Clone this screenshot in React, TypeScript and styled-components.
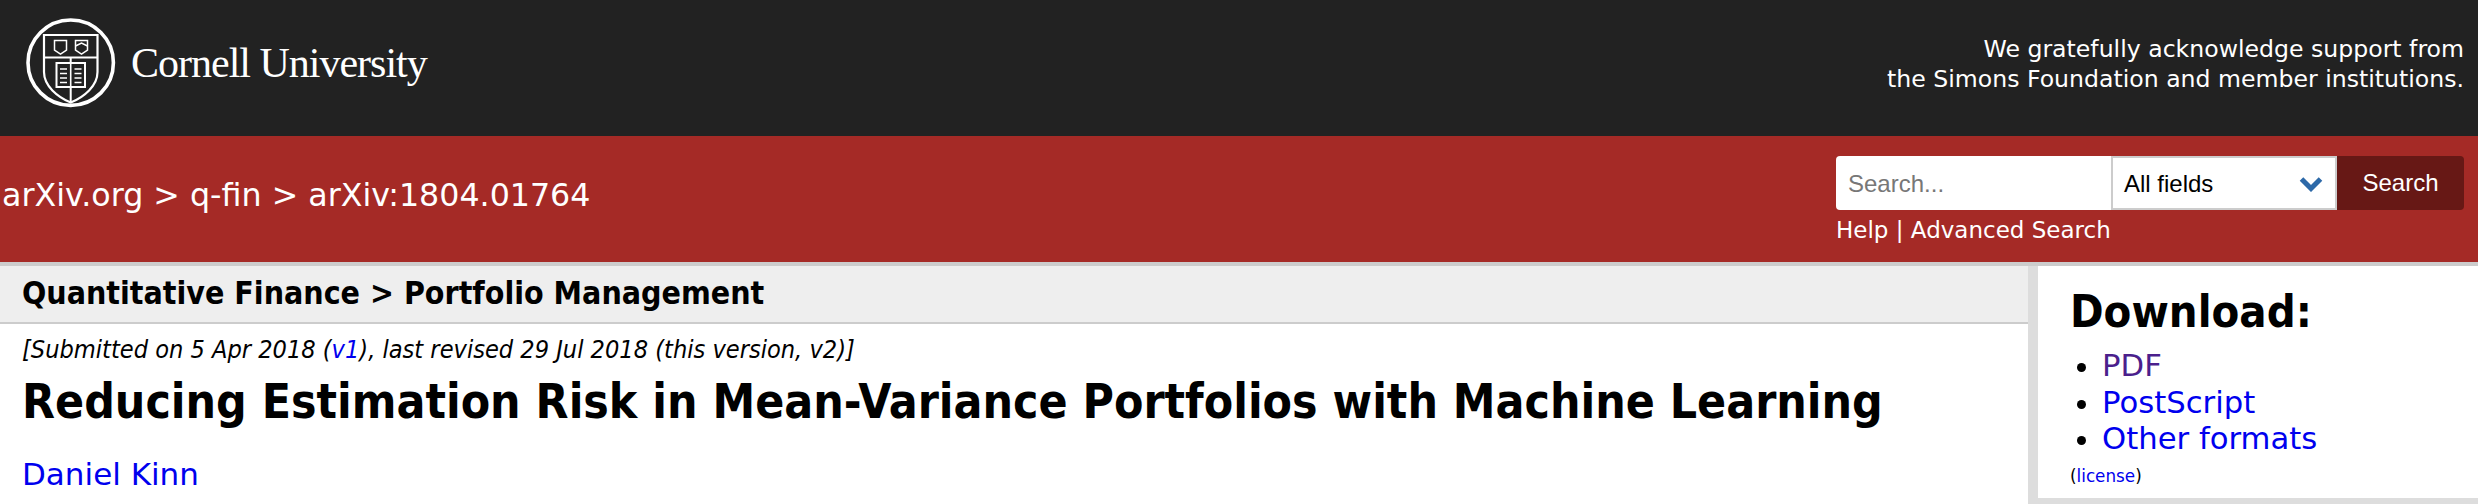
import React from 'react';
import styled, { createGlobalStyle } from 'styled-components';

const GlobalStyle = createGlobalStyle`
  html, body {
    margin: 0;
    padding: 0;
    background: #ddd;
    font-family: "DejaVu Sans", sans-serif;
    overflow: hidden;
  }
`;

const Page = styled.div`
  width: 2478px;
  height: 504px;
  display: flex;
  flex-direction: column;
  overflow: hidden;
`;

const TopBar = styled.header`
  height: 136px;
  background: #222;
  display: flex;
  align-items: flex-start;
  justify-content: space-between;
  padding: 0 14px 0 15px;
`;

const Brand = styled.a`
  display: flex;
  align-items: flex-start;
  margin-top: 10px;
  color: #fff;
`;

const BrandName = styled.span`
  font-family: "Liberation Serif", serif;
  font-size: 42px;
  line-height: 50px;
  letter-spacing: -1px;
  margin: 28px 0 0 6px;
`;

const Support = styled.p`
  margin: 34px 0 0;
  color: #fff;
  font-size: 23.6px;
  line-height: 30px;
  text-align: right;
`;

const RedBar = styled.div`
  height: 126px;
  background: #a52a26;
  display: flex;
  align-items: flex-start;
  justify-content: space-between;
  padding: 0 14px 0 2px;
  color: #fff;
`;

const Trail = styled.nav`
  margin-top: 39px;
  font-size: 31.7px;
  line-height: 40px;
  white-space: nowrap;
`;

const SearchArea = styled.div`
  margin-top: 20px;
  display: flex;
  flex-direction: column;
`;

const SearchRow = styled.form`
  display: flex;
  height: 54px;
`;

const SearchInput = styled.input`
  box-sizing: border-box;
  width: 275px;
  height: 54px;
  border: 0;
  border-radius: 4px 0 0 4px;
  padding: 2px 12px 0;
  background: #fff;
  font-family: "Liberation Sans", sans-serif;
  font-size: 24px;
  outline: none;

  &::placeholder {
    color: #777;
    opacity: 1;
  }
`;

const FieldBox = styled.div`
  box-sizing: border-box;
  width: 226px;
  height: 54px;
  border: 2px solid #ccc;
  background: #fff;
  display: flex;
  align-items: center;
  justify-content: space-between;
  padding: 1px 12px 0 11px;
  color: #000;
  font-family: "Liberation Sans", sans-serif;
  font-size: 24px;
`;

const SearchButton = styled.button`
  width: 127px;
  height: 54px;
  border: 0;
  border-radius: 0 4px 4px 0;
  background: #671815;
  color: #fff;
  font-family: "Liberation Sans", sans-serif;
  font-size: 24px;
  padding: 0;
`;

const SearchLinks = styled.div`
  margin-top: 5px;
  font-size: 23px;
  line-height: 30px;
`;

const Body = styled.div`
  flex: 1;
  display: flex;
  border-top: 4px solid #ccc;
  background: #fff;
`;

const Main = styled.main`
  width: 2028px;
  flex: none;
`;

const Subheader = styled.div`
  box-sizing: border-box;
  height: 58px;
  background: #eee;
  border-bottom: 2px solid #ccc;
  padding-left: 22px;
  font-size: 31.8px;
  font-stretch: condensed;
  font-weight: 700;
  line-height: 54px;
  color: #000;
`;

const Dateline = styled.div`
  margin: 11px 0 0 22px;
  font-size: 25.1px;
  font-stretch: condensed;
  line-height: 30px;
  font-style: italic;
  color: #000;
`;

const Title = styled.h1`
  margin: 9px 0 0 22px;
  font-size: 47.7px;
  font-stretch: condensed;
  line-height: 56px;
  font-weight: 700;
  color: #000;
`;

const Authors = styled.div`
  margin: 24px 0 0 22px;
  font-size: 31px;
  line-height: 40px;
`;

const Link = styled.a<{ $visited?: boolean }>`
  color: ${(p) => (p.$visited ? '#4b1f8c' : '#0000ee')};
`;

const Sidebar = styled.aside`
  flex: 1;
  background: #ddd;
  padding: 0 0 6px 10px;
  display: flex;
`;

const SideBox = styled.div`
  flex: 1;
  background: #fff;
  padding: 18px 0 0 32px;
`;

const SideTitle = styled.h2`
  margin: 0;
  font-size: 45px;
  font-stretch: condensed;
  line-height: 56px;
  font-weight: 700;
  color: #000;
`;

const FormatList = styled.ul`
  margin: 8px 0 0;
  padding: 0 0 0 32px;
  font-size: 30.7px;
  line-height: 36.5px;
`;

const License = styled.div`
  margin-top: 7px;
  font-size: 16.8px;
  line-height: 22px;
  color: #000;
`;

const CornellLogo = () => (
  <svg width="110" height="110" viewBox="0 0 110 110" fill="none" stroke="#fff">
    <circle cx="55.7" cy="52.7" r="42.7" strokeWidth="3.6" />
    <path d="M29 25H82.5V62C82.5 76 69 87 55.7 92.5C42.5 87 29 76 29 62Z" strokeWidth="2.2" />
    <path d="M29 47.5H82.5M55.7 47.5V53M55.7 77V92" strokeWidth="2" />
    <path d="M39.5 30.5H51.5V40L45.5 44L39.5 40Z" strokeWidth="1.5" />
    <path d="M60.5 30.5H72.5V40L66.5 44L60.5 40Z" strokeWidth="1.5" />
    <path d="M60.5 36L66.5 33L72.5 36" strokeWidth="1.5" />
    <rect x="41.5" y="53" width="28.5" height="24" strokeWidth="2" />
    <path d="M55.7 53V77" strokeWidth="1.6" />
    <path d="M45 59H52M45 63.5H52M45 68H52M45 72.5H52M59.5 59H66.5M59.5 63.5H66.5M59.5 68H66.5M59.5 72.5H66.5" strokeWidth="1.6" />
  </svg>
);

const Chevron = () => (
  <svg width="24" height="16" viewBox="0 0 24 16" fill="none">
    <path d="M2.5 3L12 12.5L21.5 3" stroke="#2d69a8" strokeWidth="5" />
  </svg>
);

const App = () => (
  <Page>
    <GlobalStyle />
    <TopBar>
      <Brand>
        <CornellLogo />
        <BrandName>Cornell University</BrandName>
      </Brand>
      <Support>
        We gratefully acknowledge support from
        <br />
        the Simons Foundation and member institutions.
      </Support>
    </TopBar>
    <RedBar>
      <Trail>arXiv.org &gt; q-fin &gt; arXiv:1804.01764</Trail>
      <SearchArea>
        <SearchRow>
          <SearchInput placeholder="Search..." />
          <FieldBox>
            All fields
            <Chevron />
          </FieldBox>
          <SearchButton type="button">Search</SearchButton>
        </SearchRow>
        <SearchLinks>Help | Advanced Search</SearchLinks>
      </SearchArea>
    </RedBar>
    <Body>
      <Main>
        <Subheader>Quantitative Finance &gt; Portfolio Management</Subheader>
        <Dateline>
          [Submitted on 5 Apr 2018 (<Link>v1</Link>), last revised 29 Jul 2018 (this version, v2)]
        </Dateline>
        <Title>Reducing Estimation Risk in Mean-Variance Portfolios with Machine Learning</Title>
        <Authors>
          <Link>Daniel Kinn</Link>
        </Authors>
      </Main>
      <Sidebar>
        <SideBox>
          <SideTitle>Download:</SideTitle>
          <FormatList>
            <li><Link $visited>PDF</Link></li>
            <li><Link>PostScript</Link></li>
            <li><Link>Other formats</Link></li>
          </FormatList>
          <License>
            (<Link>license</Link>)
          </License>
        </SideBox>
      </Sidebar>
    </Body>
  </Page>
);

export default App;
